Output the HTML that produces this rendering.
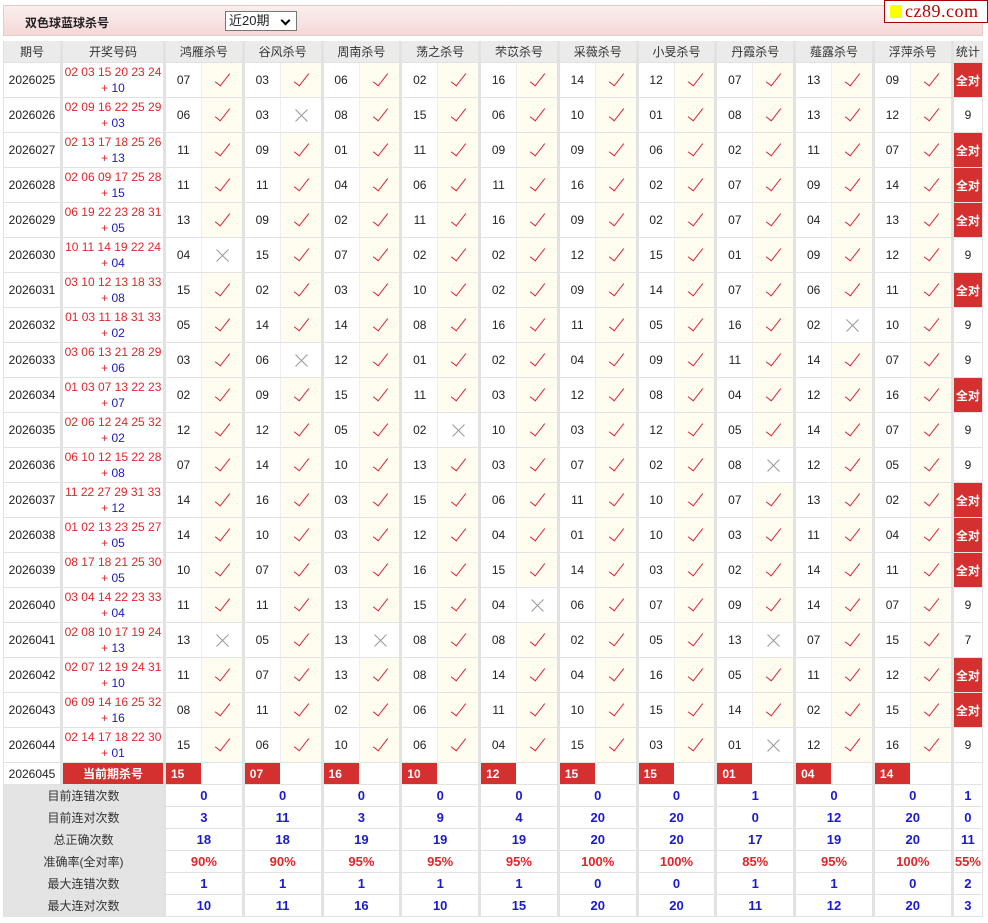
<!DOCTYPE html><html><head><meta charset="utf-8"><style>
body{margin:0;background:#fff;font-family:"Liberation Sans","Noto Sans CJK SC",sans-serif;font-size:12px;color:#222;width:988px;height:923px;overflow:hidden;position:relative}
.hd{position:absolute;left:3px;top:5px;width:978px;height:29px;border:1px solid #e8cccc;background:linear-gradient(#fbeeee,#f6d8d8)}
.hd b{position:absolute;left:21px;top:8px;font-size:12px}
.sel{position:absolute;left:221px;top:5px;border:1px solid #777;background:#fff;font-size:13px;line-height:18px;padding-left:3px;box-sizing:border-box;width:72px;height:20px}
.sel:after{content:"";position:absolute;right:7px;top:5px;width:5px;height:5px;border-right:2px solid #000;border-bottom:2px solid #000;transform:rotate(45deg)}
.logo{position:absolute;left:884px;top:0;width:102px;height:21px;border:1px solid #a00;background:#fff;font-family:"Liberation Serif",serif;font-size:18px;color:#b00;line-height:20px;letter-spacing:.5px}
.logo i{display:inline-block;width:12px;height:13px;background:#ff0;margin:0 3px 0 5px;vertical-align:-1px}
table{position:absolute;left:3px;top:41px;border-collapse:separate;border-spacing:0;table-layout:fixed;width:980px}
td{padding:0;text-align:center;border-bottom:1px solid #e2e2e2;box-sizing:border-box}
tr.h td{height:22px;background:#ebebeb;color:#333;font-size:12px}
tr.r td{height:35px}
td.p{border-left:1px solid #e2e2e2}
td.k{color:#e0262a;line-height:16px;border-left:3px solid #e2e2e2}
td.k span{color:#1a1ab8}
td.n{border-left:3px solid #e2e2e2}
td.m{background:#fffdf0;border-left:1px solid #eee;position:relative}
td.x{background:#fff;border-left:1px solid #eee;position:relative}
td.m:after{content:"";position:absolute;left:17px;top:7px;width:6px;height:15px;border-right:1.5px solid #d9263b;border-bottom:1.5px solid #d9263b;transform:rotate(38deg)}
td.x:before,td.x:after{content:"";position:absolute;left:12px;top:17px;width:17px;height:1px;background:#999;transform:rotate(45deg)}
td.x:after{transform:rotate(-45deg)}
td.s{border-left:3px solid #e2e2e2;border-right:1px solid #e2e2e2}
td.q{background:#d3302f;color:#fff;font-weight:bold}
tr.c td{height:22px}
tr.c td.n.q{text-align:left;padding-left:5px}
tr.t td{height:22px;font-weight:bold;color:#1a1ad0;font-size:13px}
tr.t td.l{background:#e4e4e4;color:#333;font-weight:normal;font-size:12px;border-left:1px solid #e2e2e2}
tr.t td.v{border-left:3px solid #e2e2e2}
tr.pc td.v{color:#e0262a}
</style></head><body>
<div class="hd"><b>双色球蓝球杀号</b><div class="sel">近20期</div></div>
<div class="logo"><i></i>cz89.com</div>
<table>
<colgroup><col style="width:57px"><col style="width:103px"><col style="width:38px"><col style="width:40.75px"><col style="width:38px"><col style="width:40.75px"><col style="width:38px"><col style="width:40.75px"><col style="width:38px"><col style="width:40.75px"><col style="width:38px"><col style="width:40.75px"><col style="width:38px"><col style="width:40.75px"><col style="width:38px"><col style="width:40.75px"><col style="width:38px"><col style="width:40.75px"><col style="width:38px"><col style="width:40.75px"><col style="width:38px"><col style="width:40.75px"><col style="width:32.5px"></colgroup>
<tr class="h"><td class="p">期号</td><td class="k" style="color:#333">开奖号码</td><td class="n" colspan="2">鸿雁杀号</td><td class="n" colspan="2">谷风杀号</td><td class="n" colspan="2">周南杀号</td><td class="n" colspan="2">荡之杀号</td><td class="n" colspan="2">芣苡杀号</td><td class="n" colspan="2">采薇杀号</td><td class="n" colspan="2">小旻杀号</td><td class="n" colspan="2">丹霞杀号</td><td class="n" colspan="2">薤露杀号</td><td class="n" colspan="2">浮萍杀号</td><td class="s">统计</td></tr>
<tr class="r"><td class="p">2026025</td><td class="k">02 03 15 20 23 24<br>+ <span>10</span></td><td class="n">07</td><td class="m"></td><td class="n">03</td><td class="m"></td><td class="n">06</td><td class="m"></td><td class="n">02</td><td class="m"></td><td class="n">16</td><td class="m"></td><td class="n">14</td><td class="m"></td><td class="n">12</td><td class="m"></td><td class="n">07</td><td class="m"></td><td class="n">13</td><td class="m"></td><td class="n">09</td><td class="m"></td><td class="s q">全对</td></tr>
<tr class="r"><td class="p">2026026</td><td class="k">02 09 16 22 25 29<br>+ <span>03</span></td><td class="n">06</td><td class="m"></td><td class="n">03</td><td class="x"></td><td class="n">08</td><td class="m"></td><td class="n">15</td><td class="m"></td><td class="n">06</td><td class="m"></td><td class="n">10</td><td class="m"></td><td class="n">01</td><td class="m"></td><td class="n">08</td><td class="m"></td><td class="n">13</td><td class="m"></td><td class="n">12</td><td class="m"></td><td class="s">9</td></tr>
<tr class="r"><td class="p">2026027</td><td class="k">02 13 17 18 25 26<br>+ <span>13</span></td><td class="n">11</td><td class="m"></td><td class="n">09</td><td class="m"></td><td class="n">01</td><td class="m"></td><td class="n">11</td><td class="m"></td><td class="n">09</td><td class="m"></td><td class="n">09</td><td class="m"></td><td class="n">06</td><td class="m"></td><td class="n">02</td><td class="m"></td><td class="n">11</td><td class="m"></td><td class="n">07</td><td class="m"></td><td class="s q">全对</td></tr>
<tr class="r"><td class="p">2026028</td><td class="k">02 06 09 17 25 28<br>+ <span>15</span></td><td class="n">11</td><td class="m"></td><td class="n">11</td><td class="m"></td><td class="n">04</td><td class="m"></td><td class="n">06</td><td class="m"></td><td class="n">11</td><td class="m"></td><td class="n">16</td><td class="m"></td><td class="n">02</td><td class="m"></td><td class="n">07</td><td class="m"></td><td class="n">09</td><td class="m"></td><td class="n">14</td><td class="m"></td><td class="s q">全对</td></tr>
<tr class="r"><td class="p">2026029</td><td class="k">06 19 22 23 28 31<br>+ <span>05</span></td><td class="n">13</td><td class="m"></td><td class="n">09</td><td class="m"></td><td class="n">02</td><td class="m"></td><td class="n">11</td><td class="m"></td><td class="n">16</td><td class="m"></td><td class="n">09</td><td class="m"></td><td class="n">02</td><td class="m"></td><td class="n">07</td><td class="m"></td><td class="n">04</td><td class="m"></td><td class="n">13</td><td class="m"></td><td class="s q">全对</td></tr>
<tr class="r"><td class="p">2026030</td><td class="k">10 11 14 19 22 24<br>+ <span>04</span></td><td class="n">04</td><td class="x"></td><td class="n">15</td><td class="m"></td><td class="n">07</td><td class="m"></td><td class="n">02</td><td class="m"></td><td class="n">02</td><td class="m"></td><td class="n">12</td><td class="m"></td><td class="n">15</td><td class="m"></td><td class="n">01</td><td class="m"></td><td class="n">09</td><td class="m"></td><td class="n">12</td><td class="m"></td><td class="s">9</td></tr>
<tr class="r"><td class="p">2026031</td><td class="k">03 10 12 13 18 33<br>+ <span>08</span></td><td class="n">15</td><td class="m"></td><td class="n">02</td><td class="m"></td><td class="n">03</td><td class="m"></td><td class="n">10</td><td class="m"></td><td class="n">02</td><td class="m"></td><td class="n">09</td><td class="m"></td><td class="n">14</td><td class="m"></td><td class="n">07</td><td class="m"></td><td class="n">06</td><td class="m"></td><td class="n">11</td><td class="m"></td><td class="s q">全对</td></tr>
<tr class="r"><td class="p">2026032</td><td class="k">01 03 11 18 31 33<br>+ <span>02</span></td><td class="n">05</td><td class="m"></td><td class="n">14</td><td class="m"></td><td class="n">14</td><td class="m"></td><td class="n">08</td><td class="m"></td><td class="n">16</td><td class="m"></td><td class="n">11</td><td class="m"></td><td class="n">05</td><td class="m"></td><td class="n">16</td><td class="m"></td><td class="n">02</td><td class="x"></td><td class="n">10</td><td class="m"></td><td class="s">9</td></tr>
<tr class="r"><td class="p">2026033</td><td class="k">03 06 13 21 28 29<br>+ <span>06</span></td><td class="n">03</td><td class="m"></td><td class="n">06</td><td class="x"></td><td class="n">12</td><td class="m"></td><td class="n">01</td><td class="m"></td><td class="n">02</td><td class="m"></td><td class="n">04</td><td class="m"></td><td class="n">09</td><td class="m"></td><td class="n">11</td><td class="m"></td><td class="n">14</td><td class="m"></td><td class="n">07</td><td class="m"></td><td class="s">9</td></tr>
<tr class="r"><td class="p">2026034</td><td class="k">01 03 07 13 22 23<br>+ <span>07</span></td><td class="n">02</td><td class="m"></td><td class="n">09</td><td class="m"></td><td class="n">15</td><td class="m"></td><td class="n">11</td><td class="m"></td><td class="n">03</td><td class="m"></td><td class="n">12</td><td class="m"></td><td class="n">08</td><td class="m"></td><td class="n">04</td><td class="m"></td><td class="n">12</td><td class="m"></td><td class="n">16</td><td class="m"></td><td class="s q">全对</td></tr>
<tr class="r"><td class="p">2026035</td><td class="k">02 06 12 24 25 32<br>+ <span>02</span></td><td class="n">12</td><td class="m"></td><td class="n">12</td><td class="m"></td><td class="n">05</td><td class="m"></td><td class="n">02</td><td class="x"></td><td class="n">10</td><td class="m"></td><td class="n">03</td><td class="m"></td><td class="n">12</td><td class="m"></td><td class="n">05</td><td class="m"></td><td class="n">14</td><td class="m"></td><td class="n">07</td><td class="m"></td><td class="s">9</td></tr>
<tr class="r"><td class="p">2026036</td><td class="k">06 10 12 15 22 28<br>+ <span>08</span></td><td class="n">07</td><td class="m"></td><td class="n">14</td><td class="m"></td><td class="n">10</td><td class="m"></td><td class="n">13</td><td class="m"></td><td class="n">03</td><td class="m"></td><td class="n">07</td><td class="m"></td><td class="n">02</td><td class="m"></td><td class="n">08</td><td class="x"></td><td class="n">12</td><td class="m"></td><td class="n">05</td><td class="m"></td><td class="s">9</td></tr>
<tr class="r"><td class="p">2026037</td><td class="k">11 22 27 29 31 33<br>+ <span>12</span></td><td class="n">14</td><td class="m"></td><td class="n">16</td><td class="m"></td><td class="n">03</td><td class="m"></td><td class="n">15</td><td class="m"></td><td class="n">06</td><td class="m"></td><td class="n">11</td><td class="m"></td><td class="n">10</td><td class="m"></td><td class="n">07</td><td class="m"></td><td class="n">13</td><td class="m"></td><td class="n">02</td><td class="m"></td><td class="s q">全对</td></tr>
<tr class="r"><td class="p">2026038</td><td class="k">01 02 13 23 25 27<br>+ <span>05</span></td><td class="n">14</td><td class="m"></td><td class="n">10</td><td class="m"></td><td class="n">03</td><td class="m"></td><td class="n">12</td><td class="m"></td><td class="n">04</td><td class="m"></td><td class="n">01</td><td class="m"></td><td class="n">10</td><td class="m"></td><td class="n">03</td><td class="m"></td><td class="n">11</td><td class="m"></td><td class="n">04</td><td class="m"></td><td class="s q">全对</td></tr>
<tr class="r"><td class="p">2026039</td><td class="k">08 17 18 21 25 30<br>+ <span>05</span></td><td class="n">10</td><td class="m"></td><td class="n">07</td><td class="m"></td><td class="n">03</td><td class="m"></td><td class="n">16</td><td class="m"></td><td class="n">15</td><td class="m"></td><td class="n">14</td><td class="m"></td><td class="n">03</td><td class="m"></td><td class="n">02</td><td class="m"></td><td class="n">14</td><td class="m"></td><td class="n">11</td><td class="m"></td><td class="s q">全对</td></tr>
<tr class="r"><td class="p">2026040</td><td class="k">03 04 14 22 23 33<br>+ <span>04</span></td><td class="n">11</td><td class="m"></td><td class="n">11</td><td class="m"></td><td class="n">13</td><td class="m"></td><td class="n">15</td><td class="m"></td><td class="n">04</td><td class="x"></td><td class="n">06</td><td class="m"></td><td class="n">07</td><td class="m"></td><td class="n">09</td><td class="m"></td><td class="n">14</td><td class="m"></td><td class="n">07</td><td class="m"></td><td class="s">9</td></tr>
<tr class="r"><td class="p">2026041</td><td class="k">02 08 10 17 19 24<br>+ <span>13</span></td><td class="n">13</td><td class="x"></td><td class="n">05</td><td class="m"></td><td class="n">13</td><td class="x"></td><td class="n">08</td><td class="m"></td><td class="n">08</td><td class="m"></td><td class="n">02</td><td class="m"></td><td class="n">05</td><td class="m"></td><td class="n">13</td><td class="x"></td><td class="n">07</td><td class="m"></td><td class="n">15</td><td class="m"></td><td class="s">7</td></tr>
<tr class="r"><td class="p">2026042</td><td class="k">02 07 12 19 24 31<br>+ <span>10</span></td><td class="n">11</td><td class="m"></td><td class="n">07</td><td class="m"></td><td class="n">13</td><td class="m"></td><td class="n">08</td><td class="m"></td><td class="n">14</td><td class="m"></td><td class="n">04</td><td class="m"></td><td class="n">16</td><td class="m"></td><td class="n">05</td><td class="m"></td><td class="n">11</td><td class="m"></td><td class="n">12</td><td class="m"></td><td class="s q">全对</td></tr>
<tr class="r"><td class="p">2026043</td><td class="k">06 09 14 16 25 32<br>+ <span>16</span></td><td class="n">08</td><td class="m"></td><td class="n">11</td><td class="m"></td><td class="n">02</td><td class="m"></td><td class="n">06</td><td class="m"></td><td class="n">11</td><td class="m"></td><td class="n">10</td><td class="m"></td><td class="n">15</td><td class="m"></td><td class="n">14</td><td class="m"></td><td class="n">02</td><td class="m"></td><td class="n">15</td><td class="m"></td><td class="s q">全对</td></tr>
<tr class="r"><td class="p">2026044</td><td class="k">02 14 17 18 22 30<br>+ <span>01</span></td><td class="n">15</td><td class="m"></td><td class="n">06</td><td class="m"></td><td class="n">10</td><td class="m"></td><td class="n">06</td><td class="m"></td><td class="n">04</td><td class="m"></td><td class="n">15</td><td class="m"></td><td class="n">03</td><td class="m"></td><td class="n">01</td><td class="x"></td><td class="n">12</td><td class="m"></td><td class="n">16</td><td class="m"></td><td class="s">9</td></tr>
<tr class="c"><td class="p">2026045</td><td class="k q">当前期杀号</td><td class="n q">15</td><td></td><td class="n q">07</td><td></td><td class="n q">16</td><td></td><td class="n q">10</td><td></td><td class="n q">12</td><td></td><td class="n q">15</td><td></td><td class="n q">15</td><td></td><td class="n q">01</td><td></td><td class="n q">04</td><td></td><td class="n q">14</td><td></td><td class="s"></td></tr>
<tr class="t"><td class="l" colspan="2">目前连错次数</td><td class="v" colspan="2">0</td><td class="v" colspan="2">0</td><td class="v" colspan="2">0</td><td class="v" colspan="2">0</td><td class="v" colspan="2">0</td><td class="v" colspan="2">0</td><td class="v" colspan="2">0</td><td class="v" colspan="2">1</td><td class="v" colspan="2">0</td><td class="v" colspan="2">0</td><td class="v s">1</td></tr>
<tr class="t"><td class="l" colspan="2">目前连对次数</td><td class="v" colspan="2">3</td><td class="v" colspan="2">11</td><td class="v" colspan="2">3</td><td class="v" colspan="2">9</td><td class="v" colspan="2">4</td><td class="v" colspan="2">20</td><td class="v" colspan="2">20</td><td class="v" colspan="2">0</td><td class="v" colspan="2">12</td><td class="v" colspan="2">20</td><td class="v s">0</td></tr>
<tr class="t"><td class="l" colspan="2">总正确次数</td><td class="v" colspan="2">18</td><td class="v" colspan="2">18</td><td class="v" colspan="2">19</td><td class="v" colspan="2">19</td><td class="v" colspan="2">19</td><td class="v" colspan="2">20</td><td class="v" colspan="2">20</td><td class="v" colspan="2">17</td><td class="v" colspan="2">19</td><td class="v" colspan="2">20</td><td class="v s">11</td></tr>
<tr class="t pc"><td class="l" colspan="2">准确率(全对率)</td><td class="v" colspan="2">90%</td><td class="v" colspan="2">90%</td><td class="v" colspan="2">95%</td><td class="v" colspan="2">95%</td><td class="v" colspan="2">95%</td><td class="v" colspan="2">100%</td><td class="v" colspan="2">100%</td><td class="v" colspan="2">85%</td><td class="v" colspan="2">95%</td><td class="v" colspan="2">100%</td><td class="v s">55%</td></tr>
<tr class="t"><td class="l" colspan="2">最大连错次数</td><td class="v" colspan="2">1</td><td class="v" colspan="2">1</td><td class="v" colspan="2">1</td><td class="v" colspan="2">1</td><td class="v" colspan="2">1</td><td class="v" colspan="2">0</td><td class="v" colspan="2">0</td><td class="v" colspan="2">1</td><td class="v" colspan="2">1</td><td class="v" colspan="2">0</td><td class="v s">2</td></tr>
<tr class="t"><td class="l" colspan="2">最大连对次数</td><td class="v" colspan="2">10</td><td class="v" colspan="2">11</td><td class="v" colspan="2">16</td><td class="v" colspan="2">10</td><td class="v" colspan="2">15</td><td class="v" colspan="2">20</td><td class="v" colspan="2">20</td><td class="v" colspan="2">11</td><td class="v" colspan="2">12</td><td class="v" colspan="2">20</td><td class="v s">3</td></tr>
</table>
</body></html>
